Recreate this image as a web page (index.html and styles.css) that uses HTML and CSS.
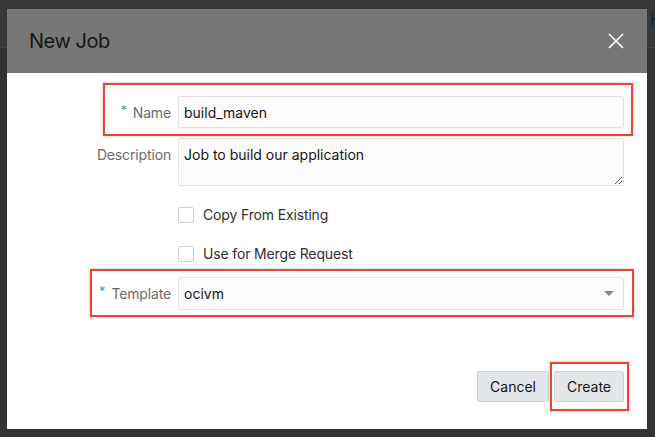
FILE: index.html
```html
<!DOCTYPE html>
<html lang="en">
<head>
<meta charset="utf-8">
<title>New Job</title>
<link rel="stylesheet" href="styles.css">
</head>
<body>
<div class="backdrop">
  <div class="bg-bar"><span class="bg-letter">H</span></div>
</div>
<div class="dialog">
  <div class="dlg-header">
    <h1 class="dlg-title">New Job</h1>
    <svg class="close" width="16" height="16" viewBox="0 0 16 16"><path d="M1 1L15 15M15 1L1 15" stroke="#fff" stroke-width="1.6" fill="none"/></svg>
  </div>
  <div class="dlg-body">
    <div class="row row-name">
      <label class="lbl"><span class="req">*</span>Name</label>
      <input class="field" type="text" value="build_maven">
      <span class="mark mark-name"></span>
    </div>
    <div class="row row-desc">
      <label class="lbl lbl-top">Description</label>
      <textarea class="field area">Job to build our application</textarea>
    </div>
    <div class="row row-check1">
      <span class="lbl"></span>
      <label class="check"><span class="box"></span>Copy From Existing</label>
    </div>
    <div class="row row-check2">
      <span class="lbl"></span>
      <label class="check"><span class="box"></span>Use for Merge Request</label>
    </div>
    <div class="row row-tpl">
      <label class="lbl"><span class="req">*</span>Template</label>
      <div class="field select">ocivm<span class="arrow"></span></div>
      <span class="mark mark-tpl"></span>
    </div>
  </div>
  <div class="dlg-footer">
    <button class="btn">Cancel</button>
    <div class="btn-wrap">
      <button class="btn">Create</button>
      <span class="mark mark-create"></span>
    </div>
  </div>
</div>
</body>
</html>
```
FILE: styles.css
```css
html, body {
  margin: 0;
  padding: 0;
}
body {
  width: 655px;
  height: 437px;
  background: #333333;
  font-family: Inter, "Noto Sans", sans-serif;
  overflow: hidden;
  position: relative;
}
.backdrop {
  height: 437px;
}
.bg-bar {
  height: 47px;
  background: #383838;
  border-bottom: 1px solid #434343;
  position: relative;
}
.bg-letter {
  position: absolute;
  left: 650px;
  top: 9px;
  font-size: 16px;
  font-weight: 600;
  color: #0e2a3e;
}
.dialog {
  position: absolute;
  left: 7px;
  top: 9px;
  width: 640px;
  height: 420px;
  background: #ffffff;
  display: flex;
  flex-direction: column;
}
.dlg-header {
  height: 64px;
  flex: none;
  background: #777777;
  display: flex;
  align-items: center;
  justify-content: space-between;
  padding: 0 23px 0 22px;
}
.dlg-title {
  margin: 0;
  font-size: 20px;
  font-weight: 400;
  color: #161616;
  letter-spacing: -0.45px;
}
.close {
  display: block;
}
.dlg-body {
  padding: 23px 23px 0 23px;
  display: flex;
  flex-direction: column;
}
.row {
  display: flex;
  align-items: center;
  position: relative;
}
.lbl {
  width: 141px;
  flex: none;
  margin-right: 7px;
  text-align: right;
  font-size: 14px;
  color: #6b6b6b;
  letter-spacing: -0.15px;
}
.lbl-top {
  align-self: flex-start;
  padding-top: 8px;
}
.req {
  color: #4f95cf;
  font-size: 13px;
  margin-right: 6px;
  position: relative;
  top: -3px;
}
.field {
  box-sizing: border-box;
  width: 446px;
  height: 32px;
  border: 1px solid #e3e3e3;
  border-radius: 2px;
  background: #fbfbfb;
  font-family: Inter, "Noto Sans", sans-serif;
  font-size: 14px;
  color: #161513;
  padding: 0 5px;
  outline: none;
  margin: 0;
}
.area {
  height: 48px;
  padding: 7px 5px;
  resize: both;
  display: block;
  line-height: 18px;
}
.row-desc {
  margin-top: 10px;
  align-items: flex-start;
}
.row-check1 {
  margin-top: 20px;
}
.row-check2 {
  margin-top: 22px;
}
.row-tpl {
  margin-top: 15px;
}
.check {
  display: flex;
  align-items: center;
  font-size: 14px;
  color: #2f2f2f;
  height: 17px;
  letter-spacing: -0.15px;
}
.box {
  box-sizing: border-box;
  width: 16px;
  height: 16px;
  border: 1px solid #cfcfcf;
  border-radius: 2px;
  background: #fff;
  margin-right: 9px;
}
.select {
  display: flex;
  align-items: center;
  position: relative;
  height: 33px;
}
.arrow {
  position: absolute;
  right: 9px;
  top: 13px;
  width: 0;
  height: 0;
  border-left: 5px solid transparent;
  border-right: 5px solid transparent;
  border-top: 5px solid #888888;
}
.dlg-footer {
  margin-top: auto;
  padding: 0 23px 27px 0;
  display: flex;
  justify-content: flex-end;
  align-items: center;
  gap: 5px;
}
.btn-wrap {
  position: relative;
}
.btn {
  display: block;
  height: 31px;
  box-sizing: border-box;
  padding: 0 12px;
  background: #e4e7ea;
  border: 1px solid #c9d0d6;
  border-radius: 2px;
  font-family: Inter, "Noto Sans", sans-serif;
  font-size: 14px;
  color: #161513;
}
.mark {
  position: absolute;
  border: 2px solid #ef4136;
  box-shadow: 0 0 2px rgba(0, 0, 0, 0.3);
  pointer-events: none;
}
.mark-name {
  left: 73px;
  top: -13px;
  right: -9px;
  bottom: -8px;
}
.mark-tpl {
  left: 60px;
  top: -8px;
  right: -10px;
  bottom: -7px;
}
.mark-create {
  left: -4px;
  top: -9px;
  right: -5px;
  bottom: -9px;
}
```
